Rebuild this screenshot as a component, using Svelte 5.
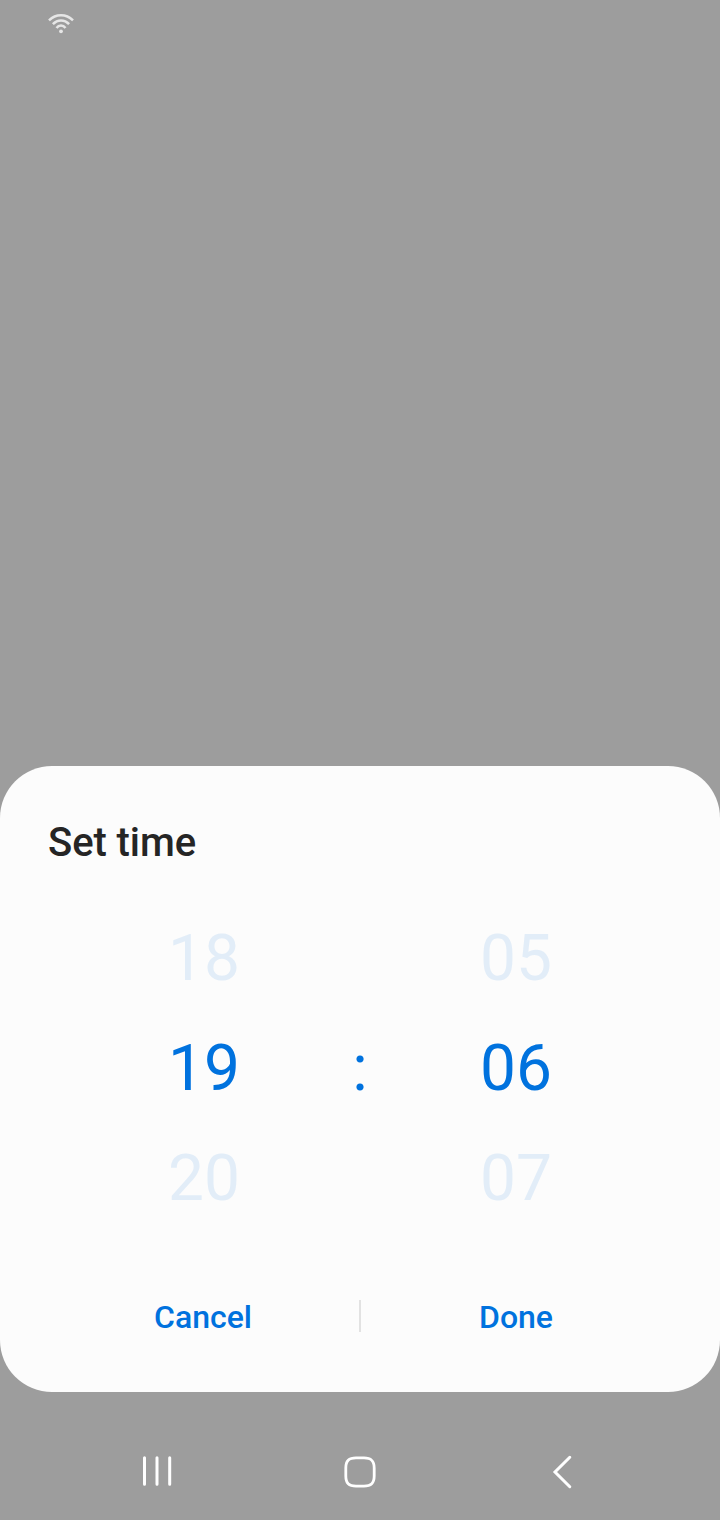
<script>
  const columns = [
    ['18', '19', '20'],
    ['05', '06', '07']
  ];
</script>

<main class="screen">
  <header class="status">
    <svg width="28" height="22" viewBox="0 0 28 22" fill="none" stroke="#e6e6e6" stroke-width="2.5">
      <path d="M2 8.4Q7.2 3.3 14 3.3T26 8.4" />
      <path d="M5.9 12.2Q9.4 8.4 14 8.4T22.1 12.2" />
      <path d="M9.5 15.9Q11.3 13.6 14 13.6T18.5 15.9" />
      <circle cx="14" cy="19.3" r="1.9" fill="#e6e6e6" stroke="none" />
    </svg>
  </header>
  <section class="dialog">
    <h1>Set time</h1>
    <div class="picker">
      <div class="column">
        {#each columns[0] as n, i}<span class:selected={i === 1}>{n}</span>{/each}
      </div>
      <div class="colon">:</div>
      <div class="column">
        {#each columns[1] as n, i}<span class:selected={i === 1}>{n}</span>{/each}
      </div>
    </div>
    <div class="actions">
      <button>Cancel</button>
      <i class="divider"></i>
      <button>Done</button>
    </div>
  </section>
  <nav>
    <svg width="32" height="34" viewBox="0 0 32 34" stroke="#fff" stroke-width="3" stroke-linecap="round">
      <path d="M3.5 2.8V29.3M16 2.8V29.3M28.7 2.8V29.3" />
    </svg>
    <svg width="34" height="34" viewBox="0 0 34 34" fill="none" stroke="#fff" stroke-width="2.8">
      <path d="M13 2.9H21C28.2 2.9 31.2 5.9 31.2 13V21C31.2 28.2 28.2 31.1 21 31.1H13C5.8 31.1 2.8 28.2 2.8 21V13C2.8 5.9 5.8 2.9 13 2.9Z" />
    </svg>
    <svg width="24" height="36" viewBox="0 0 24 36" fill="none" stroke="#fff" stroke-width="3" stroke-linecap="round">
      <path d="M19.8 3.3L5 18L19.8 32.7" />
    </svg>
  </nav>
</main>

<style>
  :global(body) { margin: 0; background: #9d9d9d; }
  .screen { width: 720px; height: 1520px; background: #9d9d9d; display: flex; flex-direction: column; overflow: hidden; font-family: Roboto, sans-serif; }
  .status { height: 766px; box-sizing: border-box; padding: 12px 47px; }
  svg { display: block; }
  .dialog { height: 626px; box-sizing: border-box; border-radius: 52px; background: #fcfcfc; flex: none; }
  h1 { margin: 0; padding: 53px 48px 0; height: 84px; font-size: 40px; line-height: 47px; font-weight: 500; color: #252525; letter-spacing: -0.08px; }
  .picker { display: grid; grid-template-columns: 216px 96px 216px; padding-left: 96px; height: 330px; font-size: 64px; color: #e2edf8; }
  .column { display: grid; grid-template-rows: repeat(3, 110px); }
  .column span, .colon { display: flex; align-items: center; justify-content: center; }
  .column .selected, .colon { color: #0072de; }
  .actions { display: grid; grid-template-columns: 312px 2px 310px; padding: 51px 47px 0; align-items: center; }
  button { font: 500 32px/62px Roboto, sans-serif; color: #0072de; background: none; border: 0; padding: 2px 0 0; height: 64px; }
  .divider { height: 32px; background: #e2e2e2; }
  nav { height: 128px; padding: 32px 0 0 141px; display: grid; grid-template-columns: 32px 34px 24px; column-gap: 170px; align-items: center; box-sizing: border-box; }
  nav svg:last-child { margin-left: 3px; }
</style>
